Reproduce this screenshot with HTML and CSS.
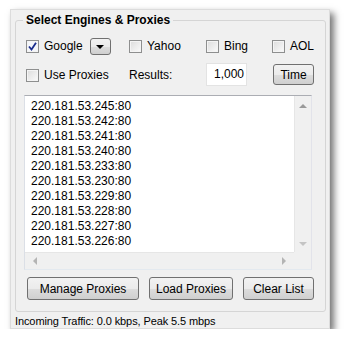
FILE: index.html
```html
<!DOCTYPE html>
<html lang="en">

<head>
    <meta charset="UTF-8">
    <title>Select Engines &amp; Proxies</title>
    <link rel="stylesheet" href="styles.css">
</head>

<body>
    <div class="window">
        <fieldset class="group">
            <legend>Select Engines &amp; Proxies</legend>
            <div class="grid">
                <div class="cell">
                    <span class="check checked">
                        <svg width="9" height="9" viewBox="0 0 9 9"><path d="M1 4.5 L3.5 7.5 L8 0.8" fill="none" stroke="#1a2c8c" stroke-width="1.8"/></svg>
                    </span>
                    <span class="label">Google</span>
                    <span class="drop"><i></i></span>
                </div>
                <div class="cell"><span class="check"></span><span class="label">Yahoo</span></div>
                <div class="cell"><span class="check"></span><span class="label">Bing</span></div>
                <div class="cell"><span class="check"></span><span class="label">AOL</span></div>

                <div class="cell row2"><span class="check"></span><span class="label">Use Proxies</span></div>
                <div class="cell row2"><span class="label plain">Results:</span></div>
                <div class="cell row2"><span class="field">1,000</span></div>
                <div class="cell row2"><span class="btn small">Time</span></div>
            </div>

            <div class="list">
                <div class="list-body">
                    <div class="lines">
                        <div>220.181.53.245:80</div>
                        <div>220.181.53.242:80</div>
                        <div>220.181.53.241:80</div>
                        <div>220.181.53.240:80</div>
                        <div>220.181.53.233:80</div>
                        <div>220.181.53.230:80</div>
                        <div>220.181.53.229:80</div>
                        <div>220.181.53.228:80</div>
                        <div>220.181.53.227:80</div>
                        <div>220.181.53.226:80</div>
                    </div>
                    <div class="vbar">
                        <span class="arr up"></span>
                        <span class="arr down"></span>
                    </div>
                </div>
                <div class="hbar">
                    <div class="htrack">
                        <span class="arr left"></span>
                        <span class="arr right"></span>
                    </div>
                    <div class="corner"></div>
                </div>
            </div>

            <div class="buttons">
                <span class="btn manage">Manage Proxies</span>
                <span class="btn load">Load Proxies</span>
                <span class="btn clear">Clear List</span>
            </div>
        </fieldset>
        <div class="status">Incoming Traffic: 0.0 kbps, Peak 5.5 mbps</div>
    </div>
</body>

</html>
```

FILE: styles.css
```css
* {
    padding: 0;
    margin: 0;
    box-sizing: border-box;
}

body {
    background: #fff;
    font-family: "Liberation Sans", Arial, sans-serif;
    font-size: 12px;
    color: #000;
}

.window {
    width: 320px;
    height: 320px;
    margin: 9px 0 0 10px;
    background: #f0f0f0;
    border: 1px solid #dcdcdc;
    box-shadow: 4px 4px 7px rgba(0, 0, 0, 0.55);
    padding: 3px 3px 0 4px;
}

.group {
    border: 1px solid #d5d5d5;
    border-radius: 3px;
    height: 299px;
    padding: 0 0 0 7px;
}

.group legend {
    font-size: 12px;
    font-weight: bold;
    padding: 0 3px;
    line-height: 14px;
}

.grid {
    display: grid;
    grid-template-columns: 103px 77px 66px 42px;
    grid-template-rows: 20px 23px;
    row-gap: 7px;
    margin: 9px 0 0 3px;
}

.cell {
    display: flex;
    align-items: center;
}

.row2 .check {
    margin-top: 1px;
}

.check {
    width: 13px;
    height: 13px;
    border: 1px solid #8e8f8f;
    background: linear-gradient(135deg, #dcdcdc, #fbfbfb);
    box-shadow: inset 0 0 0 1px #f4f4f4;
    display: flex;
    align-items: center;
    justify-content: center;
}

.check.checked {
    background: #f4f6fa;
}

.label {
    margin-left: 5px;
}

.label.plain {
    margin-left: 0;
}

.drop {
    width: 21px;
    height: 17px;
    margin-left: 7px;
    border: 1px solid #707070;
    border-radius: 3px;
    background: linear-gradient(#f2f2f2 0%, #ebebeb 50%, #dddddd 51%, #cfcfcf 100%);
    display: flex;
    align-items: center;
    justify-content: center;
}

.drop i {
    width: 0;
    height: 0;
    border-left: 4px solid transparent;
    border-right: 4px solid transparent;
    border-top: 4px solid #000;
    margin-top: 1px;
}

.field {
    width: 41px;
    height: 23px;
    background: #fff;
    border: 1px solid #e3e3e3;
    text-align: right;
    line-height: 21px;
    padding-right: 2px;
}

.btn {
    display: flex;
    align-items: center;
    justify-content: center;
    border: 1px solid #707070;
    border-radius: 3px;
    background: linear-gradient(#f2f2f2 0%, #ebebeb 50%, #dddddd 51%, #cfcfcf 100%);
    height: 23px;
}

.btn.small {
    width: 41px;
    height: 21px;
    margin-left: 1px;
}

.list {
    margin: 9px 0 0 1px;
    width: 288px;
    height: 175px;
    background: #fff;
    border: 1px solid;
    border-color: #abadb3 #e2e3ea #e3e9ef #dbdfe6;
    display: flex;
    flex-direction: column;
}

.list-body {
    flex: 1;
    display: flex;
    min-height: 0;
}

.lines {
    flex: 1;
    padding: 3px 0 0 6px;
    line-height: 15px;
    overflow: hidden;
}

.vbar {
    width: 17px;
    background: #f0f0f0;
    border-left: 1px solid #e6e6e6;
    display: flex;
    flex-direction: column;
    justify-content: space-between;
    align-items: center;
    padding: 8px 0 6px;
}

.hbar {
    height: 17px;
    display: flex;
}

.htrack {
    flex: 1;
    background: #f0f0f0;
    border-top: 1px solid #e6e6e6;
    display: flex;
    justify-content: space-between;
    align-items: center;
    padding: 0 8px;
}

.corner {
    width: 17px;
    background: #f0f0f0;
}

.arr {
    width: 0;
    height: 0;
}

.arr.up {
    border-left: 4px solid transparent;
    border-right: 4px solid transparent;
    border-bottom: 4px solid #9a9a9a;
}

.arr.down {
    border-left: 4px solid transparent;
    border-right: 4px solid transparent;
    border-top: 4px solid #c4c4c4;
}

.arr.left {
    border-top: 4px solid transparent;
    border-bottom: 4px solid transparent;
    border-right: 4px solid #b4b4b4;
}

.arr.right {
    border-top: 4px solid transparent;
    border-bottom: 4px solid transparent;
    border-left: 4px solid #b4b4b4;
}

.buttons {
    display: flex;
    margin: 7px 0 0 4px;
    gap: 10px;
}

.manage {
    width: 112px;
}

.load {
    width: 84px;
}

.clear {
    width: 71px;
}

.status {
    padding: 2px 0 0 0;
    font-size: 11px;
    line-height: 15px;
    letter-spacing: -0.1px;
}
```
